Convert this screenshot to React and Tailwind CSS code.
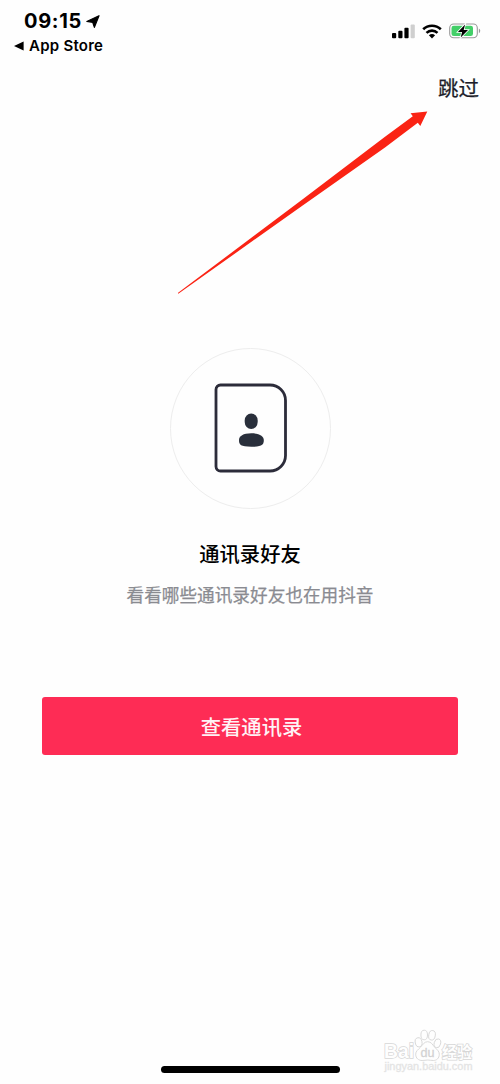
import React from 'react'

const StatusBar = () => {
  return (
    <header className="flex items-start justify-between h-16 pl-[14px] pr-[18px] text-black font-['Inter',sans-serif]">
      <div className="pt-[10px]">
        <div className="flex items-center pl-[10px] h-[23px]">
          <span className="text-[20px] leading-[23px] font-bold tracking-[0.7px]">09:15</span>
          <svg className="ml-[4px] w-[14px] h-[14px]" viewBox="0 0 14 14" fill="currentColor">
            <path d="M13 0.7 8.4 12.4 6.7 7.300 0.800 6.500Z" stroke="currentColor" strokeWidth="1.2" strokeLinejoin="round" />
          </svg>
        </div>
        <div className="flex items-center h-[26px]">
          <svg className="w-[10px] h-[10px]" viewBox="0 0 10 10" fill="currentColor">
            <path d="M9.6 0.4v9.2L0 5Z" />
          </svg>
          <span className="ml-[5px] text-[15px] font-semibold tracking-[0.25px]">App Store</span>
        </div>
      </div>

      <div className="flex items-center pt-[23px]">
        {/* Signal */}
        <svg className="w-[23px] h-[15px]" viewBox="0 0 23 15">
          <rect x="0" y="9" width="4.2" height="5.3" rx="1" />
          <rect x="6.3" y="6.7" width="4.2" height="7.6" rx="1" />
          <rect x="12.4" y="3.7" width="4.2" height="10.6" rx="1" />
          <rect x="18.6" y="0.5" width="4.2" height="13.8" rx="1" fill="#cfcfcf" />
        </svg>
        {/* Wifi */}
        <svg className="ml-[7px] w-[20px] h-[15px]" viewBox="0 0 20 15" fill="none" stroke="currentColor" strokeWidth="2.6">
          <path d="M1.2 5.3a12.6 12.6 0 0 1 17.6 0" />
          <path d="M4.5 8.9a7.9 7.9 0 0 1 11 0" />
          <path d="M10 14.4 6.9 11.3a4.6 4.6 0 0 1 6.2 0Z" fill="currentColor" stroke="none" />
        </svg>
        {/* Battery */}
        <svg className="ml-[7px] w-[33px] h-[16px]" viewBox="0 0 33 16">
          <rect x="0.7" y="1" width="27.6" height="13.8" rx="4" fill="#fff" stroke="#9a9a9a" strokeWidth="1.1" />
          <rect x="2.5" y="2.8" width="21.5" height="10.2" rx="2.3" fill="#43cf68" />
          <path d="M29.9 5.6c1.8.8 1.8 3.9 0 4.7Z" fill="#9a9a9a" />
          <path d="M16.1 1.4 8.9 9h4.2l-1.4 5.4L19 7h-4.3Z" fill="#000" stroke="#fff" strokeWidth="1.6" paintOrder="stroke" />
        </svg>
      </div>
    </header>
  )
}

const ContactsIcon = () => {
  return (
    <div className="flex items-center justify-center w-[161px] h-[161px] rounded-full border-[1.5px] border-[#ededed]">
      <svg className="ml-px -mt-px w-[74px] h-[90px]" viewBox="0 0 74 90">
        <path
          d="M6.5 2H56a15.5 15.5 0 0 1 15.5 15.5v55A15.5 15.5 0 0 1 56 88H6.5A4.5 4.5 0 0 1 2 83.5V6.5A4.5 4.5 0 0 1 6.5 2Z"
          fill="none"
          stroke="#2c2c3a"
          strokeWidth="2.8"
        />
        <rect x="30.7" y="30.5" width="13" height="15.6" rx="6.5" ry="7" fill="#292f3b" />
        <path d="M25 57.1c0-4 4-6.8 12.4-6.8s12.4 2.8 12.4 6.8c0 4.8-1.5 6.7-12.4 6.7S25 61.9 25 57.1Z" fill="#292f3b" />
      </svg>
    </div>
  )
}

// Red pointer from the middle of the page to the skip link
const Arrow = () => {
  return (
    <svg className="absolute left-[170px] top-[100px] w-[270px] h-[200px] pointer-events-none" viewBox="0 0 270 200">
      <path d="M7.8 193 133 99 215 36.800 242.800 16.300 240.600 13.300 257.300 11.500 250.300 26 247.800 22.800 215 47.500 133 105.200 8.300 193.800Z" fill="#fa2314" />
    </svg>
  )
}

const Watermark = () => {
  return (
    <svg
      className="absolute left-[380px] top-[1024px] w-[100px] h-[54px] pointer-events-none"
      viewBox="0 0 100 54"
      fill="#fefefe"
      stroke="#d6d6d6"
      strokeWidth="0.9"
      fontFamily="'Liberation Sans', 'Noto Sans CJK SC', sans-serif"
    >
      <text x="4" y="33.5" fontSize="20" fontWeight="700" textLength="30" lengthAdjust="spacingAndGlyphs" strokeWidth="1.5" paintOrder="stroke">Bai</text>
      <ellipse cx="38.6" cy="18.3" rx="3.4" ry="4.6" transform="rotate(-12 38.6 18.3)" />
      <ellipse cx="44.2" cy="11" rx="3.3" ry="4.8" />
      <ellipse cx="52" cy="11.3" rx="3.3" ry="4.8" transform="rotate(10 52 11.3)" />
      <ellipse cx="57.4" cy="19.3" rx="3.2" ry="4.5" transform="rotate(15 57.4 19.3)" />
      <path d="M47.7 17.7c3.6 0 4.7 3 7 5.5s4.6 4 4.6 7c0 4.2-2.8 6.3-6 6.3-2.3 0-3.7-.5-5.6-.5s-3.3.5-5.6.5c-3.4 0-6.4-2-6.4-6.3 0-3 2.4-4.5 4.8-7s3.6-5.5 7.2-5.5Z" />
      <text x="40.5" y="33" fontSize="13" textLength="14" lengthAdjust="spacingAndGlyphs" fill="#d2d2d2" stroke="#d2d2d2" strokeWidth="0.3">du</text>
      <text x="62" y="33.5" fontSize="15.5" fontWeight="700" textLength="30" lengthAdjust="spacingAndGlyphs" strokeWidth="1.5" paintOrder="stroke">经验</text>
      <text x="4.5" y="45.5" fontSize="11" textLength="88" lengthAdjust="spacingAndGlyphs" fill="#e4e4e4" stroke="#e4e4e4" strokeWidth="0.3">jingyan.baidu.com</text>
    </svg>
  )
}

const App = () => {
  return (
    <div className="relative flex flex-col w-[500px] h-[1084px] bg-[#fefefe] overflow-hidden font-['Noto_Sans_CJK_SC',sans-serif]">
      <StatusBar />

      <div className="flex justify-end pr-[21px] pt-[8px]">
        <button className="text-[20.5px] leading-[30px] text-[#1c1d29] [-webkit-text-stroke:0.25px_#1c1d29]">跳过</button>
      </div>

      <main className="flex flex-col items-center pt-[246px] px-[42px]">
        <ContactsIcon />
        <h1 className="mt-[29px] text-[20.3px] leading-[30px] font-medium text-black">通讯录好友</h1>
        <p className="mt-[14px] text-[17.65px] leading-[26px] text-[#8a8b91] [-webkit-text-stroke:0.25px_#8a8b91]">看看哪些通讯录好友也在用抖音</p>
        <button className="mt-[89px] pl-[3px] w-full h-[58px] rounded-[3px] bg-[#fe2c55] text-[20.3px] font-medium text-[#fff3f6]">
          查看通讯录
        </button>
      </main>

      {/* Home indicator */}
      <div className="mt-auto mb-[11px] mx-auto w-[179px] h-[7px] rounded-full bg-black" />

      <Arrow />
      <Watermark />
    </div>
  )
}

export default App
